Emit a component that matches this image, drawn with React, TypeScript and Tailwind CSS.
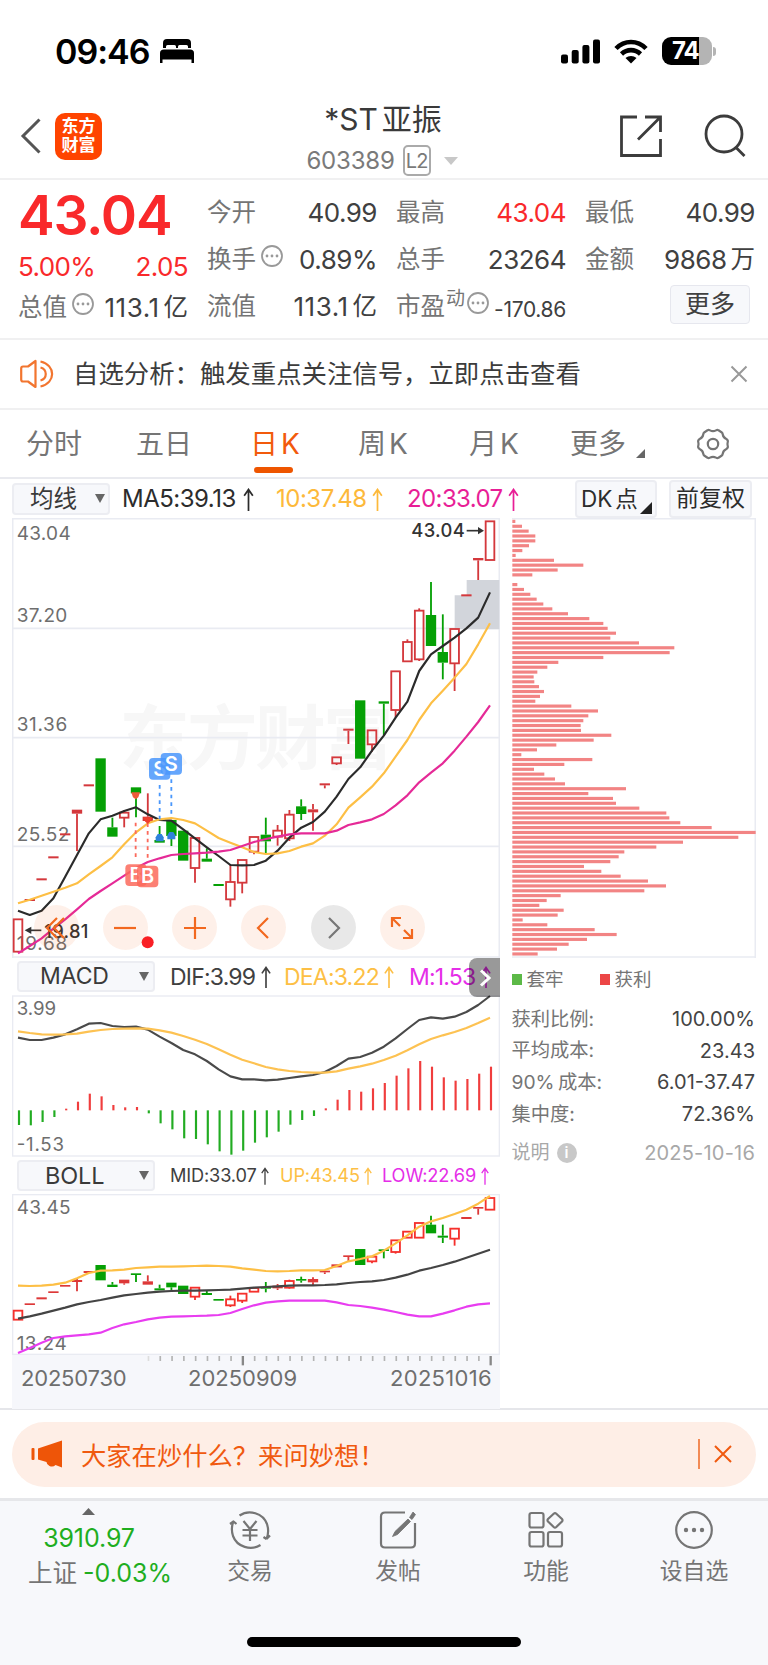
import type { ReactNode } from "react";

type Candle = {
  kind: "up" | "down" | "solid";
  top: number;
  bottom: number;
  high?: number;
  low?: number;
};

const STEP = 35.4;
const candleX = (i: number) => 54 + i * STEP;

const c = (
  kind: Candle["kind"],
  top: number,
  bottom: number,
  high?: number,
  low?: number
): Candle => ({ kind, top, bottom, high, low });

const dayCandles: Candle[] = [
  c("up", 1228, 1325),
  c("solid", 1167, 1173),
  c("solid", 1105, 1111),
  c("solid", 1039, 1045),
  c("solid", 970, 976),
  c("solid", 899, 911, 899, 1023),
  c("solid", 823, 829),
  c("down", 745, 905),
  c("down", 952, 980, 923),
  c("up", 908, 923, 900, 952),
  c("down", 832, 850, 832, 922),
  c("solid", 920, 933, 850, 938),
  c("down", 990, 998, 948),
  c("down", 930, 978, 930, 1008),
  c("down", 962, 1052),
  c("up", 984, 1074, 984, 1118),
  c("down", 1046, 1055, 1015),
  c("down", 1122, 1128),
  c("up", 1116, 1168, 1065, 1190),
  c("up", 1050, 1118, 1050, 1150),
  c("up", 981, 1025, 981, 1033),
  c("down", 974, 994, 923, 1030),
  c("up", 962, 980, 945, 1007),
  c("up", 914, 985, 900, 993),
  c("down", 889, 912, 868, 930),
  c("solid", 898, 907, 882, 962),
  c("solid", 820, 826, 820, 835),
  c("up", 742, 760, 742, 765),
  c("solid", 656, 662, 656, 702),
  c("down", 571, 746),
  c("up", 661, 703, 661, 725),
  c("down", 574, 581, 574, 675),
  c("up", 484, 600, 484, 622),
  c("up", 396, 454, 388),
  c("up", 302, 448, 295, 453),
  c("down", 315, 408, 216),
  c("down", 426, 458, 313, 508),
  c("up", 357, 460, 357, 543),
  c("solid", 253, 259),
  c("solid", 144, 151, 144, 210),
  c("up", 34, 150),
];

const bollCandles: Candle[] = [
  c("up", 466, 493),
  c("solid", 444, 449),
  c("solid", 426, 432),
  c("solid", 408, 413),
  c("solid", 389, 394),
  c("solid", 374, 380, 370, 408),
  c("solid", 347, 353),
  c("down", 329, 375),
  c("down", 388, 395, 380),
  c("solid", 373, 384, 373, 388),
  c("down", 354, 359, 354, 380),
  c("solid", 378, 388, 360),
  c("down", 399, 405, 388),
  c("down", 382, 396, 382, 404),
  c("down", 391, 416),
  c("up", 397, 424, 397, 434),
  c("down", 413, 419, 407),
  c("down", 431, 436),
  c("up", 432, 450, 421, 455),
  c("up", 415, 436, 415, 443),
  c("up", 398, 409),
  c("down", 395, 400, 380, 411),
  c("solid", 391, 399, 386, 404),
  c("up", 377, 397, 373, 400),
  c("down", 371, 376, 364, 382),
  c("solid", 371, 381, 366, 389),
  c("solid", 346, 351, 346, 356),
  c("solid", 327, 336),
  c("solid", 300, 305, 300, 318),
  c("down", 281, 329),
  c("up", 304, 318, 304, 324),
  c("down", 282, 287, 282, 309),
  c("up", 255, 290, 255, 295),
  c("up", 229, 247),
  c("up", 203, 247),
  c("down", 208, 234, 181),
  c("down", 241, 247, 208, 263),
  c("up", 220, 250, 220, 271),
  c("solid", 185, 191),
  c("solid", 155, 160, 155, 178),
  c("up", 128, 163),
];

const ma5 = [
  1202, 1215, 1202, 1165, 1100, 1035, 970, 928, 917, 903, 892, 913, 930, 932,
  958, 985, 1012, 1038, 1065, 1066, 1065, 1052, 1022, 983, 953, 936, 905, 860,
  807, 772, 722, 677, 623, 575, 483, 433, 408, 383, 355, 323, 247,
];
const ma10 = [
  1180, 1169, 1157, 1145, 1133, 1120, 1093, 1068, 1042, 1003, 967, 940, 928,
  924, 930, 940, 962, 984, 998, 1012, 1026, 1032, 1030, 1023, 1010, 1000, 977,
  943, 893, 862, 830, 790, 740, 690, 630, 580, 542, 503, 462, 403, 340,
];
const ma20 = [
  1330, 1308, 1285, 1256, 1228, 1198, 1167, 1143, 1120, 1097, 1074, 1056, 1045,
  1035, 1032, 1030, 1028, 1025, 1020, 1008, 996, 987, 980, 973, 970, 970, 970,
  962, 945, 937, 928, 912, 886, 856, 817, 788, 760, 722, 680, 636, 586,
];

const dif = [
  248, 255, 255, 248, 238, 223, 206, 204, 213, 216, 215, 224, 245, 264, 285,
  298, 318, 343, 364, 373, 373, 376, 374, 369, 364, 360, 351, 333, 311, 306,
  293, 275, 250, 222, 195, 187, 191, 185, 171, 150, 123,
];
const dea = [
  229, 234, 238, 239, 238, 236, 230, 225, 222, 221, 220, 221, 226, 233, 243,
  254, 267, 283, 299, 314, 325, 336, 343, 348, 351, 353, 353, 349, 341, 334,
  326, 315, 302, 286, 268, 252, 241, 231, 219, 204, 188,
];
const macdBars = [
  510, 511, 501, 486, 461, 440, 416, 424, 450, 457, 456, 475, 505, 523, 550,
  552, 568, 589, 599, 587, 563, 547, 530, 509, 495, 483, 460, 434, 405, 410,
  400, 384, 362, 340, 318, 335, 367, 377, 372, 356, 335,
];

const bollUp = [
  391, 392, 391, 388, 382, 369, 353, 346, 345, 343, 338, 336, 334, 334, 333,
  332, 331, 332, 334, 339, 343, 347, 348, 347, 345, 345, 344, 332, 318, 311,
  303, 286, 264, 240, 214, 198, 188, 176, 163, 145, 122,
];
const bollMid = [
  490, 483, 475, 466, 457, 447, 440, 434, 427, 420, 416, 412, 409, 407, 406,
  406, 405, 404, 403, 400, 397, 395, 393, 391, 390, 390, 389, 387, 383, 380,
  378, 374, 367, 358, 346, 338, 329, 319, 307, 295, 283,
];
const bollLow = [
  593, 578, 562, 548, 543, 540, 537, 532, 518, 507, 500, 492, 487, 484, 483,
  482, 481, 479, 473, 461, 450, 442, 438, 436, 436, 436, 436, 441, 449, 452,
  457, 463, 470, 478, 483, 483, 475, 465, 454, 447, 444,
];

const chips = [
  9, 29, 49, 69, 69, 50, 30, 10, 125, 213, 136, 60, 0, 15, 35, 54, 73, 93, 120,
  167, 231, 273, 286, 311, 294, 380, 486, 472, 273, 138, 105, 75, 64, 66, 80,
  95, 83, 69, 177, 257, 228, 213, 205, 206, 297, 244, 132, 74, 27, 240, 156,
  65, 96, 128, 158, 341, 228, 302, 311, 381, 462, 471, 504, 598, 730, 678, 512,
  432, 336, 319, 294, 215, 267, 325, 407, 461, 396, 145, 103, 81, 154, 136, 31,
  105, 247, 313, 224, 169, 134, 76,
];

const toPoints = (values: number[]) =>
  values.map((y, i) => `${candleX(i)},${y}`).join(" ");

function Line({ values, color }: { values: number[]; color: string }) {
  return (
    <polyline
      points={toPoints(values)}
      fill="none"
      stroke={color}
      strokeWidth="6.5"
      strokeLinejoin="round"
    />
  );
}

function Candles({
  data,
  red,
  solid,
}: {
  data: Candle[];
  red: string;
  solid: string;
}) {
  return (
    <g>
      {data.map((d, i) => {
        const x = candleX(i);
        const color =
          d.kind === "down" ? "#05a005" : d.kind === "up" ? red : solid;
        return (
          <g key={i} stroke={color} strokeWidth="5.5">
            {d.high !== undefined && d.high < d.top && (
              <line x1={x} x2={x} y1={d.high} y2={d.top} />
            )}
            {d.low !== undefined && d.low > d.bottom && (
              <line x1={x} x2={x} y1={d.bottom} y2={d.low} />
            )}
            {d.kind === "up" ? (
              <rect
                x={x - 13}
                y={d.top}
                width="26"
                height={d.bottom - d.top}
                fill="none"
              />
            ) : (
              <rect
                x={x - 15.5}
                y={d.top}
                width="31"
                height={d.bottom - d.top}
                fill={color}
                stroke="none"
              />
            )}
          </g>
        );
      })}
    </g>
  );
}

function Marker({ x, y, text }: { x: number; y: number; text: "S" | "B" }) {
  return (
    <g>
      <rect
        x={x}
        y={y}
        width="64"
        height="65"
        rx="12"
        fill={text === "S" ? "#4a97fb" : "#fb6a5c"}
        fillOpacity="0.85"
      />
      <text
        x={x + 32}
        y={y + 53}
        textAnchor="middle"
        fontSize="60"
        fontWeight="600"
        fill="#fff"
      >
        {text}
      </text>
    </g>
  );
}

function DayChart() {
  return (
    <svg
      viewBox="36 24 1464 1320"
      className="block h-[440px] w-[488px] font-['Inter']"
    >
      <g fill="#f7f7f7" fontSize="212" fontWeight="700">
        <text
          x="358"
          y="762"
          textLength="822"
          className="font-['Noto_Sans_CJK_SC',sans-serif]"
        >
          东方财富
        </text>
      </g>
      <g stroke="#e9ebf2" strokeWidth="5">
        <path d="M38 355H1498M38 683H1498M38 1009H1498" />
        <path d="M38 24V1344M1498 24V1344M38 26H1498M38 1341H1498" />
      </g>
      <path d="M1364 256H1400V210H1498V358H1364z" fill="#d2d5db" />
      <g fill="#6e6e6e" fontSize="57">
        <text x="50" y="90" textLength="162">43.04</text>
        <text x="50" y="335" textLength="152">37.20</text>
        <text x="50" y="663" textLength="152">31.36</text>
        <text x="50" y="992" textLength="158">25.52</text>
        <text x="50" y="1321" textLength="152">19.68</text>
      </g>
      <Candles data={dayCandles} red="#d4383c" solid="#d4383c" />
      <Line values={ma5} color="#2b2b2b" />
      <Line values={ma10} color="#fdbf45" />
      <Line values={ma20} color="#e52a97" />

      {/* buy and sell signals */}
      <g strokeWidth="5.5" strokeDasharray="11 12" fill="none">
        <path d="M479 825V932M514 808V918" stroke="#4a97fb" />
        <path d="M407 938V1052M443 940V1056" stroke="#fb6a5c" />
      </g>
      <path d="M394 847H420L415 862L407 868L399 862z" fill="#ee5a3a" />
      <path d="M430 922H456L451 934L443 942L435 934z" fill="#f0402f" />
      <path d="M467 994V982L473 972H485L491 982V994z" fill="#2f82dc" />
      <path d="M502 988V976L508 966H520L526 976V988z" fill="#2f82dc" />
      <Marker x={447} y={744} text="S" />
      <Marker x={482} y={729} text="S" />
      <Marker x={376} y={1063} text="B" />
      <Marker x={411} y={1067} text="B" />
      <circle cx="443" cy="1297" r="18" fill="#f91f25" />

      <g fill="#333" fontSize="55" fontWeight="500">
        <text x="1234" y="82" textLength="160">43.04</text>
        <text x="133" y="1285" textLength="132">19.81</text>
      </g>
      <g stroke="#333" strokeWidth="5" fill="#333">
        <path d="M1400 62H1440" />
        <path d="M1434 51L1452 62L1434 73z" strokeWidth="0" />
        <path d="M86 1261H124" />
        <path d="M94 1250L74 1261L94 1272z" strokeWidth="0" />
      </g>
    </svg>
  );
}

function MacdChart() {
  return (
    <svg
      viewBox="36 120 1464 486"
      className="block h-[162px] w-[488px] font-['Inter']"
    >
      <rect
        x="38"
        y="123"
        width="1460"
        height="480"
        fill="none"
        stroke="#e9ebf2"
        strokeWidth="4"
      />
      <g fill="#6e6e6e" fontSize="56">
        <text x="50" y="180">3.99</text>
        <text x="50" y="588" textLength="142">-1.53</text>
      </g>
      {macdBars.map((y, i) => (
        <line
          key={i}
          x1={candleX(i) + 3}
          x2={candleX(i) + 3}
          y1="466"
          y2={y}
          stroke={y > 466 ? "#22ac22" : "#f03d3d"}
          strokeWidth="6.5"
        />
      ))}
      <Line values={dif} color="#4a4a4a" />
      <Line values={dea} color="#fdc252" />
    </svg>
  );
}

function BollChart() {
  return (
    <svg
      viewBox="36 116 1464 483"
      className="block h-[161px] w-[488px] font-['Inter']"
    >
      <rect
        x="38"
        y="118"
        width="1460"
        height="479"
        fill="none"
        stroke="#e9ebf2"
        strokeWidth="4"
      />
      <g fill="#6e6e6e" fontSize="57">
        <text x="50" y="177" textLength="162">43.45</text>
        <text x="50" y="585" textLength="150">13.24</text>
      </g>
      <Candles data={bollCandles} red="#f5302c" solid="#dd3838" />
      <Line values={bollUp} color="#fdbf45" />
      <Line values={bollMid} color="#444" />
      <Line values={bollLow} color="#e83df0" />
    </svg>
  );
}

function DateAxis() {
  return (
    <div className="h-[54px] w-[488px] bg-[#f6f7fb] text-[#6e6e6e]">
      <svg viewBox="36 0 1464 33" className="block h-[11px] w-[488px]">
        {Array.from({ length: 30 }, (_, i) => {
          const major = i === 8 || i === 29;
          const x = candleX(i + 11) + 2;
          return (
            <line
              key={i}
              x1={x}
              x2={x}
              y1="3"
              y2={major ? 31 : 18}
              stroke={i === 0 ? "#ddd" : major ? "#888" : "#b4b4b4"}
              strokeWidth={major ? 7 : 5}
            />
          );
        })}
      </svg>
      <div className="flex pl-[9px] text-[22px] leading-6 tracking-[-0.2px]">
        <span className="w-[167px]">20250730</span>
        <span className="w-[202px] tracking-[0px]">20250909</span>
        <span className="tracking-[0.3px]">20251016</span>
      </div>
    </div>
  );
}

function ChipChart() {
  return (
    <svg viewBox="1534 24 732 1320" className="block h-[440px] w-[244px]">
      <path
        d="M1534 26H2264M2264 24V1344M1534 1341H2264"
        stroke="#e9ebf2"
        strokeWidth="5"
        fill="none"
      />
      {chips.map((w, i) => (
        <rect
          key={i}
          x="1535"
          y={29.5 + i * 14.58}
          width={w}
          height="9.5"
          fill="#f28484"
        />
      ))}
    </svg>
  );
}

function StatusBar() {
  return (
    <div className="flex h-[94px] items-center pt-2 pr-[52px] pl-[55px]">
      <span className="text-[34px] font-semibold tracking-[-1px] text-black">
        09:46
      </span>
      <svg viewBox="0 0 34 24" className="ml-[11px] h-6 w-[34px]">
        <path d="M3 9V4Q3 0 7 0H27Q31 0 31 4V9H28V7.500Q28 6 26.500 6H19.500Q18 6 18 7.500V9H16V7.500Q16 6 14.500 6H7.500Q6 6 6 7.500V9z" />
        <path d="M0 24V14Q0 10.500 4 10.500H30Q34 10.500 34 14V24H31.500V20.500H2.500V24z" />
      </svg>
      <svg viewBox="0 0 39 25" className="ml-auto h-[25px] w-[39px]">
        <rect x="0" y="15.500" width="7" height="9" rx="2" />
        <rect x="10.700" y="11" width="7" height="13.500" rx="2" />
        <rect x="21.400" y="6" width="7" height="18.500" rx="2" />
        <rect x="32" y="0.500" width="7" height="24" rx="2" />
      </svg>
      <svg viewBox="0 0 34 25" className="ml-[14px] h-[25px] w-[34px]">
        <g fill="none" stroke="#000" strokeWidth="4.600">
          <path d="M2 9.500C10.500 0.800 23.500 0.800 32 9.500" />
          <path d="M7.500 15C13 9.800 21 9.800 26.500 15" />
        </g>
        <path d="M17 24.500L11.500 19C14.500 16.200 19.500 16.200 22.500 19z" />
      </svg>
      <div className="ml-[14px] flex h-7 w-[50px] items-center overflow-hidden rounded-[9px] bg-[linear-gradient(90deg,#000_75%,#b4b4b4_75%)] pl-[10px] text-[24px] font-bold tracking-[-1px] text-white">
        74
      </div>
      <div className="ml-[1px] h-[9px] w-[3px] rounded-r-full bg-[#b4b4b4]" />
    </div>
  );
}

function Header() {
  return (
    <header className="flex h-[86px] items-center border-b-2 border-[#f0f0f1] pr-[21px] pl-5">
      <svg
        viewBox="0 0 22 36"
        className="h-9 w-[22px]"
        fill="none"
        stroke="#555"
        strokeWidth="3"
      >
        <path d="M19.500 1.500L3 18L19.500 34.500" />
      </svg>
      <div className="ml-[13px] flex h-[47px] w-[47px] flex-col items-center justify-center rounded-[10px] bg-[#ff4400] text-[17px] leading-[19px] font-bold text-white">
        <span>东方</span>
        <span>财富</span>
      </div>
      <div className="flex flex-1 flex-col items-center pt-[5px] pl-[45px]">
        <h1 className="flex items-center gap-1 text-[30px] leading-9 text-[#3a3a3a]">
          <span>*ST</span>
          <span>亚振</span>
        </h1>
        <div className="mt-2 mr-[2px] flex items-center text-[24px] leading-8 text-[#7a7a7a]">
          <span className="tracking-[-0.2px]">603389</span>
          <span className="ml-2 flex h-[31px] w-7 items-center justify-center rounded-[5px] border-2 border-[#aaa] text-[20px] tracking-[-1px]">
            L2
          </span>
          <svg viewBox="0 0 14 8" className="ml-[13px] h-2 w-[14px]">
            <path d="M0 0H14L7 8z" fill="#c8c8c8" />
          </svg>
        </div>
      </div>
      <svg
        viewBox="0 0 44 44"
        className="h-11 w-11"
        fill="none"
        stroke="#3c3c3c"
        strokeWidth="2.800"
      >
        <path d="M18 3H2.500V41.500H41.500V25" />
        <path d="M26 3H41.500V18M41.500 3L19 25.500" />
      </svg>
      <svg
        viewBox="0 0 44 44"
        className="ml-10 h-11 w-11"
        fill="none"
        stroke="#3c3c3c"
        strokeWidth="2.800"
      >
        <circle cx="21" cy="20" r="18" />
        <path d="M33 33.500L41.500 42" />
      </svg>
    </header>
  );
}

function More() {
  return (
    <svg viewBox="0 0 24 24" className="h-6 w-6 shrink-0" fill="#999">
      <circle cx="12" cy="12" r="10" fill="none" stroke="#999" strokeWidth="1.800" />
      <circle cx="7" cy="12" r="1.400" />
      <circle cx="12" cy="12" r="1.400" />
      <circle cx="17" cy="12" r="1.400" />
    </svg>
  );
}

function Stat({
  label,
  value,
  unit,
  info,
  red,
}: {
  label: string;
  value: string;
  unit?: string;
  info?: boolean;
  red?: boolean;
}) {
  return (
    <div className="flex h-[47px] items-center justify-between whitespace-nowrap">
      <span className="flex items-center text-[24.500px] text-[#757575]">
        {label}
        {info && (
          <span className="-mt-2 ml-1">
            <More />
          </span>
        )}
      </span>
      <span
        className={`flex items-center text-[26px] ${
          unit === "亿" ? "tracking-[0.5px]" : "tracking-[-0.5px]"
        } ${red ? "text-[#f9292b]" : "text-[#404040]"}`}
      >
        {value}
        {unit && (
          <span className="ml-1 text-[24.500px] tracking-normal">{unit}</span>
        )}
      </span>
    </div>
  );
}

function Quote() {
  return (
    <section className="flex h-40 gap-[19px] border-b-2 border-[#f0f0f1] pt-[9px] pl-[18px] text-[#404040]">
      <div className="w-[170px]">
        <div className="h-[59px] text-[55px] leading-[53px] font-semibold tracking-[-1.200px] text-[#f9292b]">
          43.04
        </div>
        <div className="flex h-9 items-center justify-between text-[26px] tracking-[-0.6px] text-[#f9292b]">
          <span>5.00%</span>
          <span>2.05</span>
        </div>
        <Stat label="总值" value="113.1" unit="亿" info />
      </div>
      <div className="w-[170px]">
        <Stat label="今开" value="40.99" />
        <Stat label="换手" value="0.89%" info />
        <Stat label="流值" value="113.1" unit="亿" />
      </div>
      <div className="w-[170px]">
        <Stat label="最高" value="43.04" red />
        <Stat label="总手" value="23264" />
        <div className="flex h-[47px] items-center">
          <span className="text-[24.500px] text-[#757575]">市盈</span>
          <span className="-mt-[14px] ml-[1px] text-[19px] text-[#757575]">
            动
          </span>
          <span className="-mt-2 ml-[1px]">
            <More />
          </span>
          <span className="mt-[7px] ml-auto text-[21px] tracking-[-0.3px]">
            -170.86
          </span>
        </div>
      </div>
      <div className="w-[170px]">
        <Stat label="最低" value="40.99" />
        <Stat label="金额" value="9868" unit="万" />
        <div className="mt-[2px] mr-[5px] ml-auto flex h-[39px] w-20 items-center justify-center rounded-[4px] border border-[#e6e7ee] bg-[#f7f8fb] pt-[1px] text-[25px]">
          更多
        </div>
      </div>
    </section>
  );
}

function Notice() {
  return (
    <section className="flex h-[70px] items-center border-b-2 border-[#f0f0f1] pr-5 pl-5">
      <svg
        viewBox="0 0 34 30"
        className="h-[30px] w-[34px]"
        fill="none"
        stroke="#f2752f"
        strokeWidth="2.200"
        strokeLinejoin="round"
      >
        <path d="M15.500 2V28L8 22.500H3Q1.200 22.500 1.200 20.500V9.500Q1.200 7.500 3 7.500H8z" />
        <path d="M20.500 2.500C36 6 36 24 20.500 27.500M20.500 8.500C27.500 10.500 27.500 19.500 20.500 21.500" />
      </svg>
      <p className="ml-[19px] text-[25.400px] text-[#3c3c3c]">
        自选分析：触发重点关注信号，立即点击查看
      </p>
      <svg
        viewBox="0 0 18 18"
        className="ml-auto h-[18px] w-[18px]"
        stroke="#999"
        strokeWidth="2"
      >
        <path d="M1.500 1.500L16.500 16.500M16.500 1.500L1.500 16.500" />
      </svg>
    </section>
  );
}

function Tabs() {
  return (
    <nav className="flex h-[69px] items-center border-b-2 border-[#e9eaef] pt-[1px] pl-[26px] text-[28px] text-[#757575]">
      <span className="w-[110px]">分时</span>
      <span className="w-[114px]">五日</span>
      <span className="relative w-[108px] text-[#f25a0c]">
        日<span className="ml-[3px]">K</span>
        <span className="absolute -bottom-2 left-1 h-[6px] w-[39px] rounded-full bg-[#ee5500]" />
      </span>
      <span className="w-[111px]">
        周<span className="ml-[3px]">K</span>
      </span>
      <span className="w-[101px]">
        月<span className="ml-[3px]">K</span>
      </span>
      <span>更多</span>
      <svg viewBox="0 0 9 9" className="mt-[18px] ml-[10px] h-[9px] w-[9px]">
        <path d="M9 0V9H0z" fill="#666" />
      </svg>
      <svg
        viewBox="0 0 34 32"
        className="ml-[51px] h-8 w-[34px]"
        fill="none"
        stroke="#757575"
        strokeWidth="2.200"
        strokeLinejoin="round"
      >
        <path d="M11.500 2.300Q12.500 1.600 14 2.400Q17 4 20 2.400Q21.500 1.600 22.500 2.300L25.500 4.200Q26.600 5 26.800 6.500Q27.200 9.500 30 10.800Q31.600 11.600 31.900 13Q31 16 31.900 19Q31.600 20.400 30 21.200Q27.200 22.500 26.800 25.500Q26.600 27 25.500 27.800L22.500 29.700Q21.500 30.400 20 29.600Q17 28 14 29.600Q12.500 30.400 11.500 29.700L8.500 27.800Q7.400 27 7.200 25.500Q6.800 22.500 4 21.200Q2.400 20.400 2.100 19Q3 16 2.100 13Q2.400 11.600 4 10.800Q6.800 9.500 7.200 6.500Q7.400 5 8.500 4.200z" />
        <circle cx="17" cy="16" r="5.200" />
      </svg>
    </nav>
  );
}

function Select({ label, className }: { label: string; className: string }) {
  return (
    <div
      className={`flex items-center justify-between rounded-[4px] border-2 border-[#ecedf2] bg-[#f7f8fb] text-[#3a3a3a] ${className}`}
    >
      <span>{label}</span>
      <svg viewBox="0 0 10 9" className="h-[9px] w-[10px]">
        <path d="M0 0H10L5 9z" fill="#666" />
      </svg>
    </div>
  );
}

function Up({ className }: { className: string }) {
  return (
    <svg
      viewBox="0 0 11 24"
      className={className}
      fill="none"
      stroke="currentColor"
      strokeWidth="1.800"
    >
      <path d="M5.500 24V2M1 8L5.500 1.500L10 8" />
    </svg>
  );
}

function RoundButton({
  children,
  gray,
}: {
  children: ReactNode;
  gray?: boolean;
}) {
  return (
    <div
      className={`flex h-[45px] w-[45px] items-center justify-center rounded-full ${
        gray ? "bg-black/9" : "bg-[#f25a0c]/9"
      }`}
    >
      <svg
        viewBox="0 0 24 24"
        className="h-6 w-6"
        fill="none"
        stroke={gray ? "#777" : "#f2681f"}
        strokeWidth="2.200"
      >
        {children}
      </svg>
    </div>
  );
}

function ChartControls() {
  return (
    <div className="absolute bottom-2 left-[21.500px] flex gap-[24.300px]">
      <RoundButton>
        <path d="M13 2L3 12L13 22M20 2L10 12L20 22" />
      </RoundButton>
      <RoundButton>
        <path d="M1 12H23" />
      </RoundButton>
      <RoundButton>
        <path d="M1 12H23M12 1V23" />
      </RoundButton>
      <RoundButton>
        <path d="M16 2L6 12L16 22" />
      </RoundButton>
      <RoundButton gray>
        <path d="M8 2L18 12L8 22" />
      </RoundButton>
      <RoundButton>
        <path d="M2 11V2H11M2 2L10 10M22 13V22H13M22 22L14 14" />
      </RoundButton>
    </div>
  );
}

function Toolbar() {
  return (
    <div className="flex h-[39px] items-center pl-3 text-[24px] text-[#2c2c2c]">
      <Select
        label="均线"
        className="h-8 w-[98px] pr-[3px] pl-4 text-[23.500px]"
      />
      <div className="ml-3 flex w-[154px] items-center gap-[7px] pt-[1px] tracking-[-0.500px]">
        MA5:39.13
        <Up className="h-[23px] w-[11px]" />
      </div>
      <div className="flex w-[131px] items-center gap-[5px] pt-[1px] tracking-[-0.500px] text-[#fdb93a]">
        10:37.48
        <Up className="h-[23px] w-[11px]" />
      </div>
      <div className="flex items-center gap-[5px] pt-[1px] tracking-[-0.6px] text-[#e81e96]">
        20:33.07
        <Up className="h-[23px] w-[11px]" />
      </div>
      <div className="relative ml-auto flex h-[38px] w-[82px] items-center rounded-[4px] border-2 border-[#ecedf2] bg-[#f7f8fb] pl-1 text-[22.500px]">
        <span>DK</span>
        <span className="ml-[3px]">点</span>
        <svg
          viewBox="0 0 12 12"
          className="absolute right-[3px] bottom-[2px] h-3 w-3"
        >
          <path d="M12 0V12H0z" fill="#222" />
        </svg>
      </div>
      <div className="mr-4 ml-3 flex h-[38px] w-[83px] items-center justify-center rounded-[4px] border-2 border-[#ecedf2] bg-[#f7f8fb] text-[23px]">
        前复权
      </div>
    </div>
  );
}

function ChipRow({ label, value }: { label: string; value: string }) {
  return (
    <div className="flex h-[31.600px] items-center justify-between pt-[1px]">
      <span className="text-[19.300px] text-[#757575]">{label}</span>
      <span className="text-[20px] text-[#444]">{value}</span>
    </div>
  );
}

function ChipPanel() {
  return (
    <aside className="ml-[11.500px] w-[243.500px]">
      <ChipChart />
      <div className="flex h-[43px] items-center text-[18.500px] text-[#757575]">
        <span className="mr-[5px] h-[11px] w-[10px] bg-[#5cb947]" />
        <span className="w-[73px]">套牢</span>
        <span className="mr-[5px] h-[11px] w-[10px] bg-[#ec4646]" />
        <span>获利</span>
      </div>
      <div className="pt-[2px]">
        <ChipRow label="获利比例:" value="100.00%" />
        <ChipRow label="平均成本:" value="23.43" />
        <ChipRow label={"90%\u2009成本:"} value="6.01-37.47" />
        <ChipRow label="集中度:" value="72.36%" />
      </div>
      <div className="mt-2 flex h-8 items-center text-[19px] text-[#a8a8a8]">
        <span>说明</span>
        <span className="ml-[7px] flex h-5 w-5 items-center justify-center rounded-full bg-[#c8c8c8] text-[15px] font-semibold text-white">
          i
        </span>
        <span className="ml-auto text-[20px] tracking-[0.2px]">2025-10-16</span>
      </div>
    </aside>
  );
}

function Charts() {
  return (
    <main className="flex h-[892px] border-b-2 border-[#e5e6ea] pl-3">
      <div className="w-[488px]">
        <div className="relative">
          <DayChart />
          <ChartControls />
        </div>
        <div className="relative flex h-[37px] items-center pl-[5px] text-[23px] tracking-[-0.800px]">
          <Select
            label="MACD"
            className="h-[31px] w-[138px] pr-1 pl-[21px] tracking-[-0.100px]"
          />
          <div className="ml-[15px] flex w-[114px] items-center gap-[6px] pt-[1px] text-[#404040]">
            DIF:3.99
            <Up className="h-[22px] w-[10px]" />
          </div>
          <div className="flex w-[125px] items-center gap-[5px] pt-[1px] text-[#fdbf45]">
            DEA:3.22
            <Up className="h-[22px] w-[10px]" />
          </div>
          <div className="flex items-center gap-[6px] pt-[1px] text-[#e52ee8]">
            M:1.53
            <Up className="h-[22px] w-[10px]" />
          </div>
          <div className="absolute top-0 right-0 flex h-[39px] w-[31px] items-center justify-center rounded-l-[8px] bg-black/40">
            <svg
              viewBox="0 0 12 18"
              className="h-[18px] w-3"
              fill="none"
              stroke="#fff"
              strokeWidth="3"
            >
              <path d="M2 1.500L10 9L2 16.500" />
            </svg>
          </div>
        </div>
        <MacdChart />
        <div className="flex h-[37px] items-center pl-[5px] text-[18.200px] tracking-[-0.150px]">
          <Select
            label="BOLL"
            className="h-[31px] w-[138px] pr-1 pl-[26px] text-[23.500px]"
          />
          <div className="ml-[15px] flex w-[110px] items-center gap-1 pt-[1px] text-[#404040]">
            MID:33.07
            <Up className="h-[18px] w-2" />
          </div>
          <div className="flex w-[102px] items-center gap-1 pt-[1px] text-[#fdbf45]">
            UP:43.45
            <Up className="h-[18px] w-2" />
          </div>
          <div className="flex items-center gap-[5px] pt-[1px] text-[#e52ee8]">
            LOW:22.69
            <Up className="h-[18px] w-2" />
          </div>
        </div>
        <BollChart />
        <DateAxis />
      </div>
      <ChipPanel />
    </main>
  );
}

function Banner() {
  return (
    <div className="flex h-[91px] items-center border-b-[3px] border-[#e6e7ea] px-3">
      <div className="flex h-[65px] w-full items-center rounded-full bg-[#feeee6] pr-6 pl-[19px] text-[#f0590f]">
        <svg viewBox="0 0 32 28" className="h-7 w-8" fill="#ee5508">
          <rect x="0.500" y="8" width="3" height="12" rx="1" />
          <path d="M7 8.500L31 0.500V27.500L24.500 25Q22 27.500 18.500 26Q15.500 24.500 15.500 22L7 19.500z" />
        </svg>
        <span className="ml-[18px] pt-1 text-[25.300px]">
          大家在炒什么？来问妙想！
        </span>
        <span className="mr-[14px] ml-auto h-[30px] w-[2px] bg-[#f28a55]" />
        <svg
          viewBox="0 0 18 18"
          className="h-[18px] w-[18px]"
          stroke="#f0590f"
          strokeWidth="2"
        >
          <path d="M1 1L17 17M17 1L1 17" />
        </svg>
      </div>
    </div>
  );
}

function NavItem({ label, children }: { label: string; children: ReactNode }) {
  return (
    <div className="flex w-[148px] flex-col items-center pt-[9px]">
      <svg
        viewBox="0 0 42 40"
        className="h-10 w-[42px]"
        fill="none"
        stroke="#757575"
        strokeWidth="2.200"
        strokeLinejoin="round"
      >
        {children}
      </svg>
      <span className="mt-[5px] text-[22.800px] leading-8 text-[#757575]">
        {label}
      </span>
    </div>
  );
}

function BottomNav() {
  return (
    <footer className="flex h-[164px] flex-col items-center bg-[#f7f8fb]">
      <div className="flex h-[136px] w-full">
        <div className="flex w-[176px] flex-col items-center pt-[7px] pl-[2px] text-[25px] text-[#1fae1f]">
          <svg viewBox="0 0 13 7" className="mr-[1px] h-[7px] w-[13px]">
            <path d="M0 7H13L6.500 0z" fill="#666" />
          </svg>
          <span className="mt-[5px] leading-9 tracking-[-0.100px]">
            3910.97
          </span>
          <span className="ml-[22px] flex leading-[34px]">
            <span className="mr-[6px] text-[24.500px] text-[#757575]">上证</span>
            -0.03%
          </span>
        </div>
        <NavItem label="交易">
          <path d="M10.500 5.500C20-1 34 3 38 14Q40.500 22 37.500 29M37.500 29L41 25.500M37.500 29L34.500 27M31.500 35C22 41 8 37 4 26Q1.500 18 4.500 11.500M1 14L4.500 11.500L7.500 14" />
          <path d="M14.500 11L21 19L27.500 11M13.500 20H28.500M13.500 25.500H28.500M21 19V31" />
        </NavItem>
        <NavItem label="发帖">
          <path d="M28 2.500H8Q4 2.500 4 6.500V33.500Q4 37.500 8 37.500H34Q38 37.500 38 33.500V13" />
          <path
            d="M36 2L38.500 4.500L35 9.500L32.500 7.500zM31 9L33.500 11.500L20.500 24.500L15.500 26.500L18 21.500z"
            fill="#757575"
            strokeWidth="0.800"
          />
        </NavItem>
        <NavItem label="功能">
          <rect x="4.500" y="3" width="14" height="14.500" rx="2" />
          <rect x="4.500" y="22" width="14" height="14.500" rx="2" />
          <rect x="23" y="22" width="14" height="14.500" rx="2" />
          <path d="M28.700 3.700Q30 2.500 31.300 3.700L37 9Q38 10.200 37 11.500L31.300 17Q30 18.200 28.700 17L23 11.500Q22 10.200 23 9z" />
        </NavItem>
        <NavItem label="设自选">
          <circle cx="21" cy="20" r="17.800" />
          <g fill="#757575" stroke="none">
            <circle cx="13" cy="20" r="2.200" />
            <circle cx="21" cy="20" r="2.200" />
            <circle cx="29" cy="20" r="2.200" />
          </g>
        </NavItem>
      </div>
      <div className="h-[10px] w-[274px] rounded-full bg-black" />
    </footer>
  );
}

export default function App() {
  return (
    <div className="h-[1665px] w-[768px] overflow-hidden bg-white font-['Inter','Noto_Sans_CJK_SC',sans-serif]">
      <StatusBar />
      <Header />
      <Quote />
      <Notice />
      <Tabs />
      <Toolbar />
      <Charts />
      <Banner />
      <BottomNav />
    </div>
  );
}
